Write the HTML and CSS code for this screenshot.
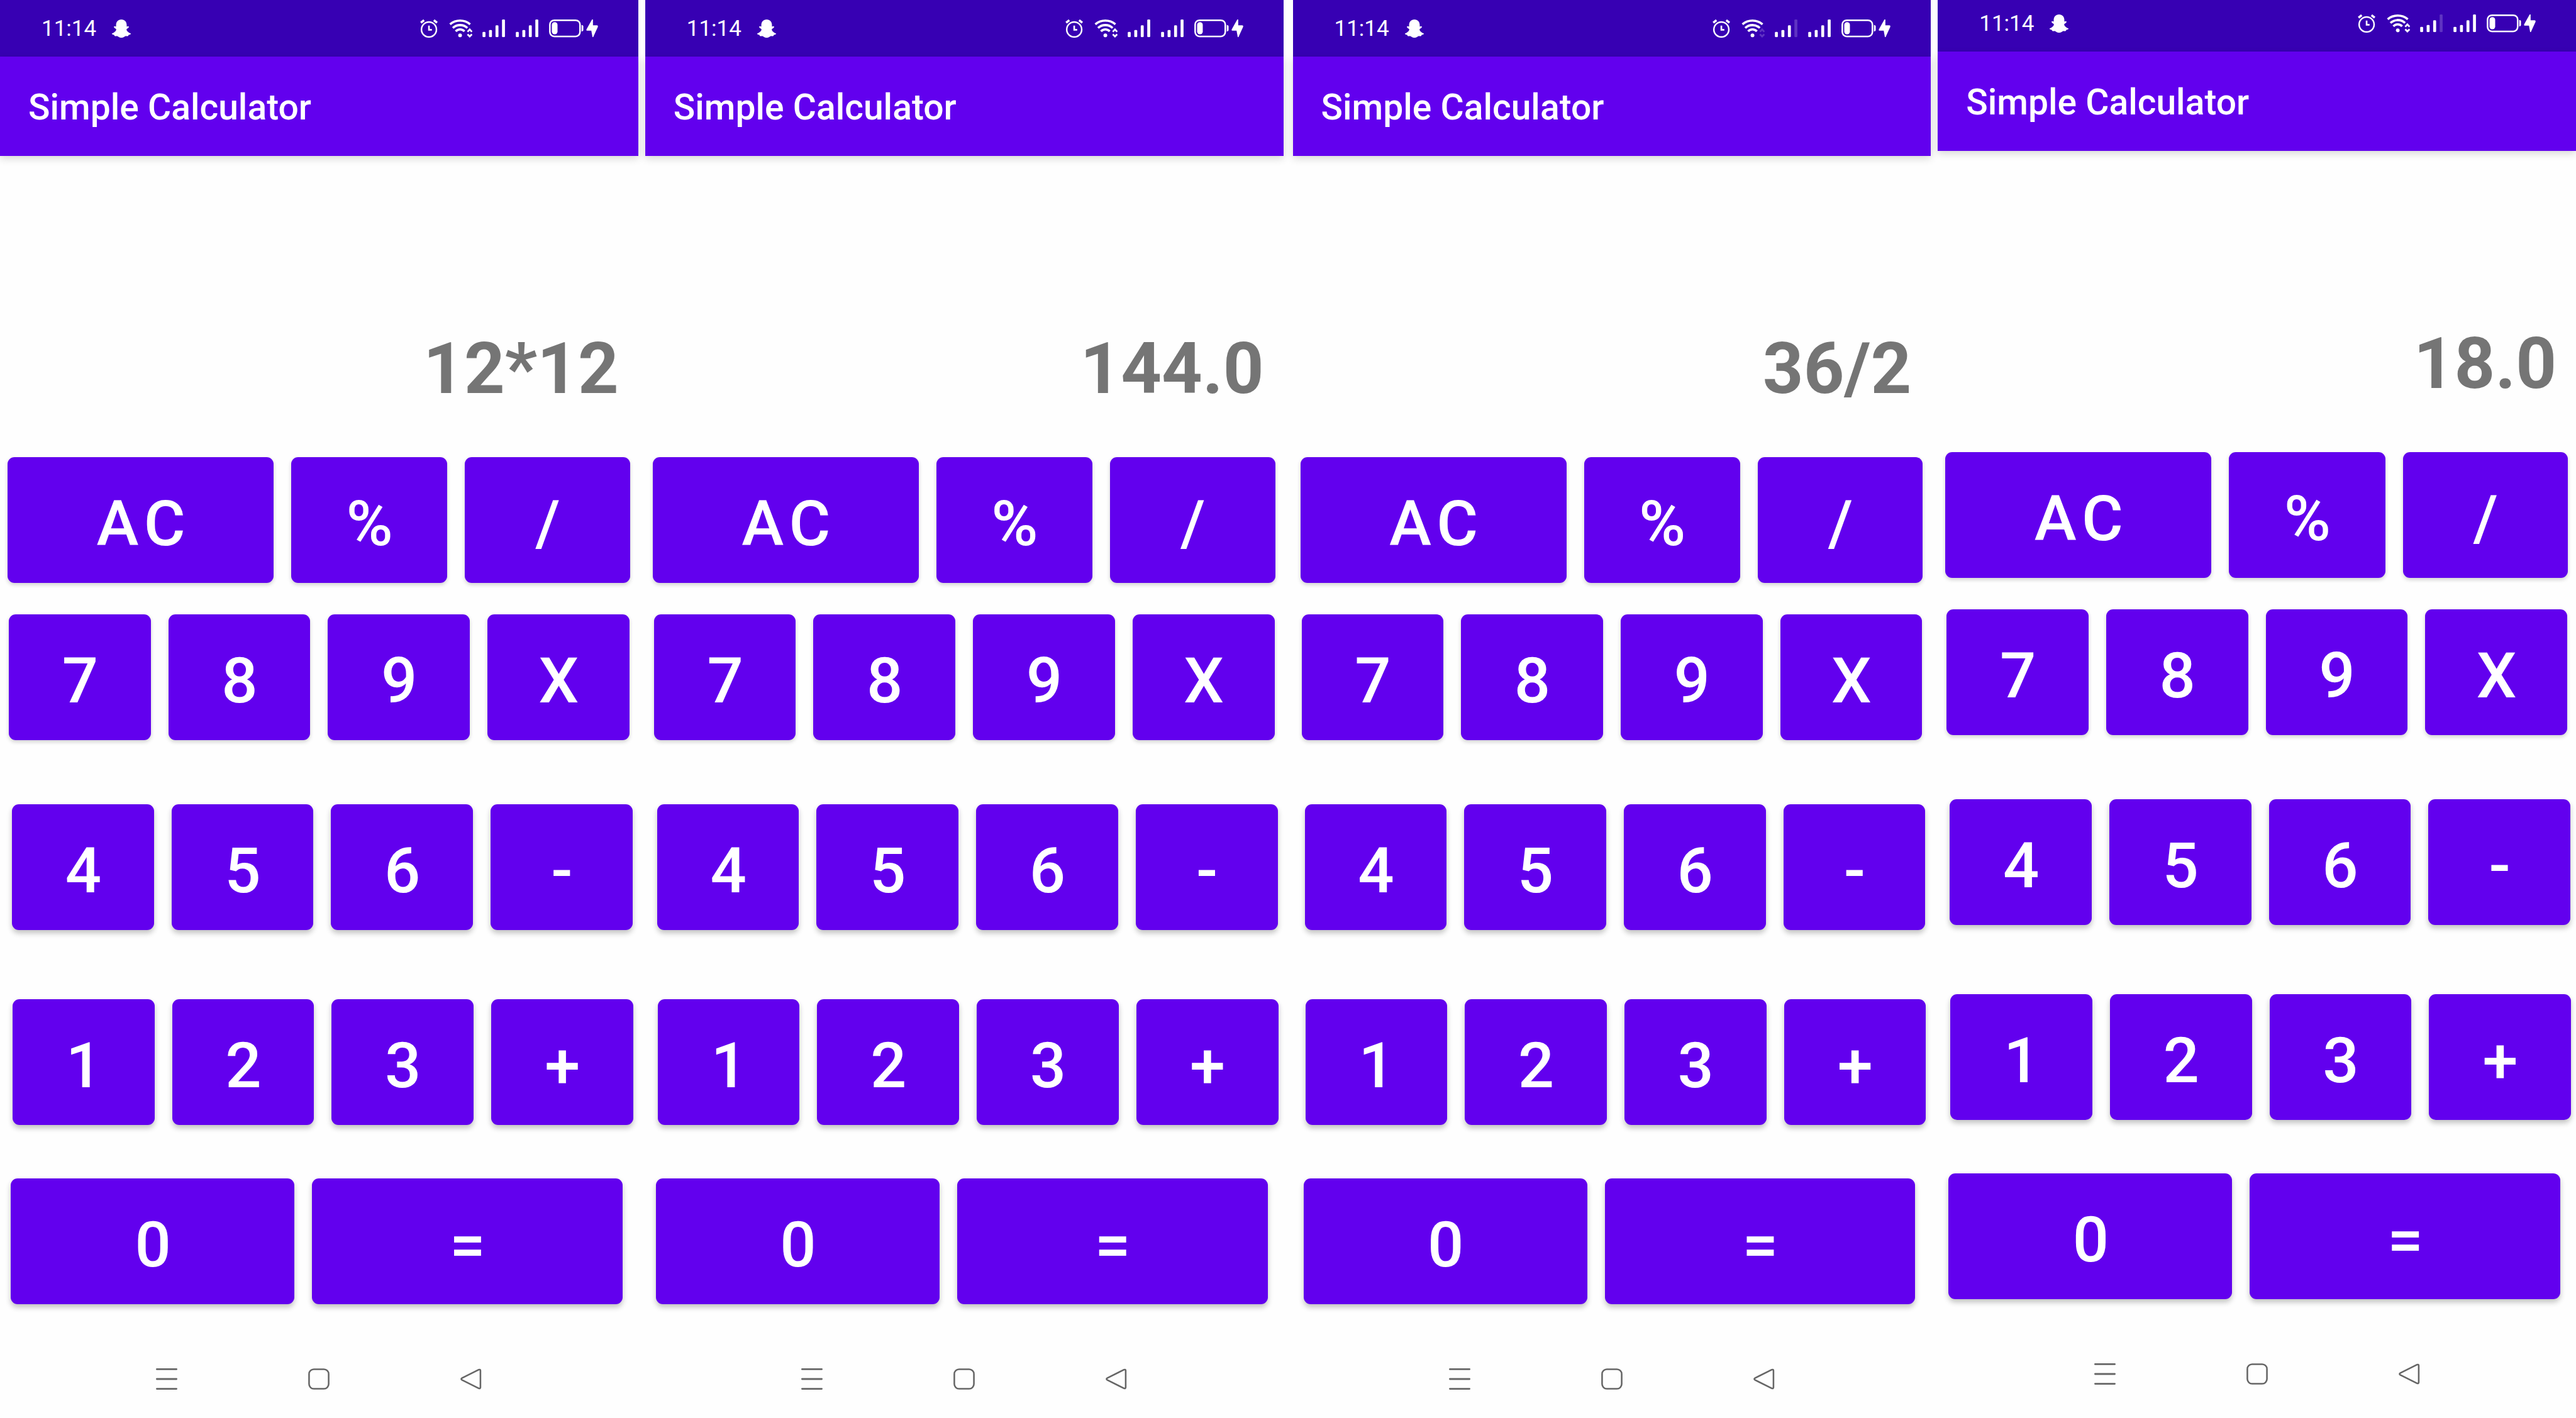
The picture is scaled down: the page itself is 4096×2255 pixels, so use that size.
FILE: index.html
```
<!DOCTYPE html>
<html lang="en">
<head>
<meta charset="utf-8">
<meta name="viewport" content="width=device-width, initial-scale=1">
<title>Simple Calculator</title>
<link rel="stylesheet" href="styles.css">
</head>
<body>
<svg class="sprite" aria-hidden="true">
  <symbol id="ghost" viewBox="0 0 34 33"><path fill="currentColor" d="M17 1C11.5 1 8 5 8 10.5V13C6.500 12.500 4.500 12 4.300 13.700C4.200 15.500 7 16 8.300 17.500C8.500 20 5 23.500 1 24.800C.7 26 1.500 26.500 5 27.300C5 29 6 29.500 9.500 29C12 30 13.500 32 17 32C20.500 32 22 30 24.500 29C28 29.500 29 29 29 27.300C32.500 26.500 33.300 26 33 24.800C29 23.500 25.500 20 25.700 17.500C27 16 29.800 15.500 29.700 13.700C29.500 12 27.500 12.500 26 13V10.500C26 5 22.500 1 17 1Z"/></symbol>
  <symbol id="alarm" viewBox="0 0 32 33"><g fill="none" stroke="currentColor"><circle cx="15" cy="18" r="12.700" stroke-width="2.600"/><path stroke-width="2.800" d="M15 11.500V18.500H20"/><path stroke-width="3.800" d="M1.300 6.500L6.700 2.300M28.700 6.500L23.300 2.300"/></g></symbol>
  <symbol id="wifi" viewBox="0 0 42 33"><g fill="none" stroke="currentColor" stroke-width="3.800"><path d="M2.800 9A27 27 0 0 1 37.200 9"/><path d="M7.500 15.500A18 18 0 0 1 32.500 15.500"/><path d="M12.500 21.300A10 10 0 0 1 27.500 21.300"/></g><circle cx="20" cy="28" r="3.200" fill="currentColor"/></symbol>
  <symbol id="traffic" viewBox="0 0 42 33"><path fill="none" stroke="currentColor" stroke-width="3" d="M32.800 22L36.500 18L40.200 22M32.800 26.200L36.500 30L40.200 26.200"/></symbol>
  <symbol id="bars" viewBox="0 0 40 33"><g fill="currentColor"><rect x="0" y="22" width="5" height="9" rx="1.500"/><rect x="11" y="19" width="5" height="12" rx="1.500"/><rect x="22" y="11" width="5" height="20" rx="1.500"/></g></symbol>
  <symbol id="top-bar" viewBox="0 0 40 33"><rect x="33" y="1" width="5" height="30" rx="1.500" fill="currentColor"/></symbol>
  <symbol id="battery" viewBox="0 0 84 33"><rect x="1.400" y="2.300" width="51" height="27.400" rx="7.500" fill="none" stroke="currentColor" stroke-width="2.700"/><rect x="4.700" y="5.700" width="9.600" height="20.400" rx="4.500" fill="currentColor"/><path fill="currentColor" d="M55 10.300C57 10.300 58 11.500 58 13V18.500C58 20 57 21.200 55 21.200Z"/><path fill="currentColor" d="M72.700 1L63.300 17.800Q62.600 20 64.800 20H71.500L73.500 31H74.700L82.700 13.200Q83.200 11 81 11H74.300V1Z"/></symbol>
  <symbol id="recents" viewBox="0 0 36 36"><path fill="none" stroke="currentColor" stroke-width="3" stroke-linecap="round" d="M1.500 1.500H34.500M1.500 18H34.500M1.500 34.500H34.500"/></symbol>
  <symbol id="home" viewBox="0 0 36 36"><rect x="1.500" y="1.500" width="33" height="33" rx="8" fill="none" stroke="currentColor" stroke-width="2.700"/></symbol>
  <symbol id="back" viewBox="0 0 36 36"><path fill="none" stroke="currentColor" stroke-width="2.700" stroke-linejoin="round" d="M31 2.300L3 16.200Q0 18 3 19.800L31 33.700Q33.800 34.500 33.800 32V4Q33.800 1.500 31 2.300Z"/></symbol>
</svg>

<main class="gallery">
  <div class="pair">
    <section class="phone">
      <div class="status">
        <time class="clock">11:14</time>
        <svg class="ghost"><use href="#ghost"/></svg>
        <div class="indicators">
          <svg class="alarm"><use href="#alarm"/></svg>
          <svg class="wifi"><use href="#wifi"/><use href="#traffic"/></svg>
          <svg class="signal"><use href="#bars"/><use href="#top-bar"/></svg>
          <svg class="signal"><use href="#bars"/><use href="#top-bar"/></svg>
          <svg class="battery"><use href="#battery"/></svg>
        </div>
      </div>
      <header class="appbar"><h1 class="title">Simple Calculator</h1></header>
      <output class="display">12*12</output>
      <div class="row row-top"><button class="key">AC</button><button class="key">%</button><button class="key">/</button></div>
      <div class="row row-789"><button class="key">7</button><button class="key">8</button><button class="key">9</button><button class="key">X</button></div>
      <div class="row row-456"><button class="key">4</button><button class="key">5</button><button class="key">6</button><button class="key">-</button></div>
      <div class="row row-123"><button class="key">1</button><button class="key">2</button><button class="key">3</button><button class="key">+</button></div>
      <div class="row row-zero"><button class="key">0</button><button class="key">=</button></div>
      <nav class="nav">
        <button class="nav-key" aria-label="Recent apps"><svg><use href="#recents"/></svg></button>
        <button class="nav-key" aria-label="Home"><svg><use href="#home"/></svg></button>
        <button class="nav-key" aria-label="Back"><svg><use href="#back"/></svg></button>
      </nav>
    </section>

    <section class="phone">
      <div class="status">
        <time class="clock">11:14</time>
        <svg class="ghost"><use href="#ghost"/></svg>
        <div class="indicators">
          <svg class="alarm"><use href="#alarm"/></svg>
          <svg class="wifi"><use href="#wifi"/><use href="#traffic"/></svg>
          <svg class="signal"><use href="#bars"/><use href="#top-bar"/></svg>
          <svg class="signal"><use href="#bars"/><use href="#top-bar"/></svg>
          <svg class="battery"><use href="#battery"/></svg>
        </div>
      </div>
      <header class="appbar"><h1 class="title">Simple Calculator</h1></header>
      <output class="display">144.0</output>
      <div class="row row-top"><button class="key">AC</button><button class="key">%</button><button class="key">/</button></div>
      <div class="row row-789"><button class="key">7</button><button class="key">8</button><button class="key">9</button><button class="key">X</button></div>
      <div class="row row-456"><button class="key">4</button><button class="key">5</button><button class="key">6</button><button class="key">-</button></div>
      <div class="row row-123"><button class="key">1</button><button class="key">2</button><button class="key">3</button><button class="key">+</button></div>
      <div class="row row-zero"><button class="key">0</button><button class="key">=</button></div>
      <nav class="nav">
        <button class="nav-key" aria-label="Recent apps"><svg><use href="#recents"/></svg></button>
        <button class="nav-key" aria-label="Home"><svg><use href="#home"/></svg></button>
        <button class="nav-key" aria-label="Back"><svg><use href="#back"/></svg></button>
      </nav>
    </section>
  </div>

  <div class="pair">
    <section class="phone">
      <div class="status">
        <time class="clock">11:14</time>
        <svg class="ghost"><use href="#ghost"/></svg>
        <div class="indicators">
          <svg class="alarm"><use href="#alarm"/></svg>
          <svg class="wifi"><use href="#wifi"/><use class="dim" href="#traffic"/></svg>
          <svg class="signal"><use href="#bars"/><use class="dim" href="#top-bar"/></svg>
          <svg class="signal"><use href="#bars"/><use href="#top-bar"/></svg>
          <svg class="battery"><use href="#battery"/></svg>
        </div>
      </div>
      <header class="appbar"><h1 class="title">Simple Calculator</h1></header>
      <output class="display">36/2</output>
      <div class="row row-top"><button class="key">AC</button><button class="key">%</button><button class="key">/</button></div>
      <div class="row row-789"><button class="key">7</button><button class="key">8</button><button class="key">9</button><button class="key">X</button></div>
      <div class="row row-456"><button class="key">4</button><button class="key">5</button><button class="key">6</button><button class="key">-</button></div>
      <div class="row row-123"><button class="key">1</button><button class="key">2</button><button class="key">3</button><button class="key">+</button></div>
      <div class="row row-zero"><button class="key">0</button><button class="key">=</button></div>
      <nav class="nav">
        <button class="nav-key" aria-label="Recent apps"><svg><use href="#recents"/></svg></button>
        <button class="nav-key" aria-label="Home"><svg><use href="#home"/></svg></button>
        <button class="nav-key" aria-label="Back"><svg><use href="#back"/></svg></button>
      </nav>
    </section>

    <section class="phone phone-raised">
      <div class="status">
        <time class="clock">11:14</time>
        <svg class="ghost"><use href="#ghost"/></svg>
        <div class="indicators">
          <svg class="alarm"><use href="#alarm"/></svg>
          <svg class="wifi"><use href="#wifi"/><use href="#traffic"/></svg>
          <svg class="signal"><use href="#bars"/><use class="dim" href="#top-bar"/></svg>
          <svg class="signal"><use href="#bars"/><use href="#top-bar"/></svg>
          <svg class="battery"><use href="#battery"/></svg>
        </div>
      </div>
      <header class="appbar"><h1 class="title">Simple Calculator</h1></header>
      <output class="display">18.0</output>
      <div class="row row-top"><button class="key">AC</button><button class="key">%</button><button class="key">/</button></div>
      <div class="row row-789"><button class="key">7</button><button class="key">8</button><button class="key">9</button><button class="key">X</button></div>
      <div class="row row-456"><button class="key">4</button><button class="key">5</button><button class="key">6</button><button class="key">-</button></div>
      <div class="row row-123"><button class="key">1</button><button class="key">2</button><button class="key">3</button><button class="key">+</button></div>
      <div class="row row-zero"><button class="key">0</button><button class="key">=</button></div>
      <nav class="nav">
        <button class="nav-key" aria-label="Recent apps"><svg><use href="#recents"/></svg></button>
        <button class="nav-key" aria-label="Home"><svg><use href="#home"/></svg></button>
        <button class="nav-key" aria-label="Back"><svg><use href="#back"/></svg></button>
      </nav>
    </section>
  </div>
</main>
</body>
</html>
```
FILE: styles.css
```
:root {
  --primary: #6200ee;
  --primary-dark: #3700b3;
}

* {
  box-sizing: border-box;
}

body {
  margin: 0;
  background: #fefefe;
  font-family: Roboto, "Liberation Sans", sans-serif;
}

.sprite {
  display: none;
}

.gallery {
  display: grid;
  grid-template-columns: 1fr 1fr;
  gap: 15px;
  overflow: hidden;
}

.pair {
  display: grid;
  grid-template-columns: 1fr 1fr;
  gap: 11px;
  align-items: start;
}

.phone {
  display: flex;
  flex-direction: column;
  min-width: 0;
}

/* The last capture sits slightly higher than its neighbours. */
.phone-raised {
  margin-top: -8px;
}

.status {
  display: flex;
  align-items: center;
  height: 90px;
  padding: 0 63px 0 66px;
  background: var(--primary-dark);
  color: #fff;
}

.clock {
  padding-top: 2px;
  font-size: 35px;
  line-height: 42px;
}

.ghost {
  width: 32px;
  height: 31px;
  margin-left: 24px;
}

.indicators {
  display: flex;
  align-items: center;
  gap: 15px;
  margin-left: auto;
}

.indicators svg {
  height: 31px;
}

.alarm {
  width: 30px;
}

.wifi {
  width: 39px;
}

.signal {
  width: 38px;
}

.battery {
  width: 79px;
}

.dim {
  opacity: 0.2;
}

.appbar {
  display: flex;
  align-items: center;
  height: 158px;
  padding: 4px 45px 0;
  background: var(--primary);
  color: #fff;
  box-shadow: 0 4px 12px rgba(0, 0, 0, 0.16);
}

.title {
  margin: 0;
  font-size: 57px;
  font-weight: 500;
  line-height: 66px;
}

.display {
  display: flex;
  align-items: flex-end;
  justify-content: flex-end;
  height: 479px;
  padding: 0 31px 74px;
  color: #757575;
  font-size: 113px;
  font-weight: 700;
  line-height: 132px;
}

.row {
  display: grid;
  grid-template-columns: repeat(4, 1fr);
  gap: 28px;
}

.row-top {
  grid-template-columns: 450fr 264fr 279fr;
  padding: 0 13px 0 12px;
}

.row-789 {
  margin-top: 50px;
  padding: 0 14px;
}

.row-456 {
  margin-top: 102px;
  padding: 0 9px 0 19px;
}

.row-123 {
  margin-top: 110px;
  padding: 0 8px 0 20px;
}

.row-zero {
  grid-template-columns: 480fr 525fr;
  margin-top: 85px;
  padding: 0 25px 0 17px;
}

.key {
  min-width: 0;
  height: 200px;
  padding: 11px 0 0 10px;
  border: 0;
  border-radius: 11px;
  background: var(--primary);
  color: #fff;
  font-family: inherit;
  font-size: 101px;
  font-weight: 500;
  line-height: 118px;
  letter-spacing: 9px;
  box-shadow: 0 3px 6px rgba(0, 0, 0, 0.18);
}

.row-456 .key,
.row-123 .key,
.row-zero .key {
  box-shadow: 0 5px 8px rgba(0, 0, 0, 0.24);
}

.nav {
  display: flex;
  justify-content: center;
  gap: 208px;
  padding: 102px 0 45px;
}

.nav-key {
  display: flex;
  width: 34px;
  height: 34px;
  padding: 0;
  border: 0;
  background: none;
  color: #666;
}

.nav-key svg {
  width: 100%;
  height: 100%;
}
```
